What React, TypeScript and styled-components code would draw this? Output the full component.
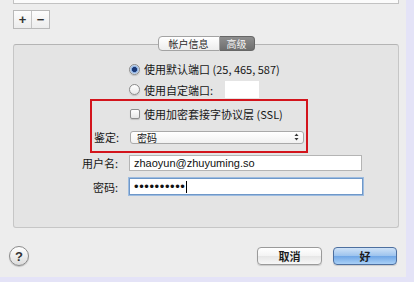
import React from 'react';
import styled, { createGlobalStyle } from 'styled-components';

const GlobalStyle = createGlobalStyle`
  html, body {
    margin: 0;
    padding: 0;
  }
  body {
    font-family: 'Liberation Sans', 'Noto Sans CJK SC', sans-serif;
    font-size: 11px;
    color: #161616;
  }
`;

const Screen = styled.div`
  width: 414px;
  height: 282px;
  background: #e4e3f7;
  overflow: hidden;
`;

const Window = styled.div`
  width: 406px;
  height: 277px;
  background: #ededed;
  display: flex;
  flex-direction: column;
`;

const TopSection = styled.div`
  padding-left: 13px;
  display: flex;
  flex-direction: column;
`;

const ListBox = styled.div`
  width: 384px;
  height: 3px;
  background: #fbfbfb;
  border: 1px solid #c2c2c2;
  border-top: none;
`;

const SegGroup = styled.div`
  margin-top: 6px;
  display: flex;
  width: 37px;
  height: 19px;
  border: 1px solid #b9b9b9;
  background: linear-gradient(#fdfdfd, #ececec);
  box-sizing: border-box;
`;

const SegButton = styled.div<{ $last?: boolean }>`
  flex: 1;
  display: flex;
  align-items: center;
  justify-content: center;
  font-weight: bold;
  font-size: 13px;
  color: #333;
  border-right: ${(p) => (p.$last ? 'none' : '1px solid #c4c4c4')};
`;

const TabRow = styled.div`
  margin-top: 7px;
  margin-bottom: -7px;
  display: flex;
  justify-content: center;
  position: relative;
  z-index: 1;
  width: 386px;
`;

const Tab = styled.div<{ $active?: boolean; $side: 'left' | 'right' }>`
  height: 15px;
  box-sizing: border-box;
  padding: 0 ${(p) => (p.$side === 'left' ? '10px' : '7px')};
  display: flex;
  align-items: center;
  font-size: 10px;
  font-family: 'Noto Sans CJK SC', sans-serif;
  color: ${(p) => (p.$active ? '#f4f4f4' : '#2a2a2a')};
  background: ${(p) =>
    p.$active ? 'linear-gradient(#8e8e8e, #6e6e6e)' : 'linear-gradient(#ffffff, #ededed)'};
  border: 1px solid ${(p) => (p.$active ? '#666' : '#a3a3a3')};
  border-radius: ${(p) => (p.$side === 'left' ? '4px 0 0 4px' : '0 4px 4px 0')};
  border-left: ${(p) => (p.$side === 'right' ? 'none' : undefined)};
`;

const GroupBox = styled.div`
  width: 386px;
  height: 184px;
  box-sizing: border-box;
  background: #e4e4e4;
  border: 1px solid #c6c6c6;
  border-top-color: #b4b4b4;
  border-radius: 3px;
  padding-top: 16px;
  display: flex;
  flex-direction: column;
`;

const OptionRow = styled.div<{ $indent: number; $top?: number }>`
  display: flex;
  align-items: center;
  gap: 4px;
  padding-left: ${(p) => p.$indent}px;
  margin-top: ${(p) => p.$top ?? 0}px;
  min-height: 14px;
  font-family: 'Noto Sans CJK SC', sans-serif;
  font-size: 11px;
`;

const Radio = styled.span<{ $on?: boolean }>`
  width: 11px;
  height: 11px;
  box-sizing: border-box;
  border-radius: 50%;
  border: 1px solid #8b8b8b;
  background: ${(p) =>
    p.$on ? 'radial-gradient(circle, #1b3a78 0 2.2px, #7fa7dc 2.8px, #eef3fb 5px)' : 'linear-gradient(#ffffff, #e9e9e9)'};
  box-shadow: 0 1px 1px rgba(0, 0, 0, 0.15);
  flex-shrink: 0;
`;

const Checkbox = styled.span`
  width: 10px;
  height: 10px;
  box-sizing: border-box;
  border: 1px solid #8d8d8d;
  border-radius: 2px;
  background: linear-gradient(#ffffff, #e6e6e6);
  box-shadow: 0 1px 1px rgba(0, 0, 0, 0.15);
  flex-shrink: 0;
`;

const PortInput = styled.div`
  width: 34px;
  height: 17px;
  background: #fff;
  margin-left: 8px;
`;

const Highlight = styled.div`
  margin-top: 1px;
  margin-left: 76px;
  width: 218px;
  box-sizing: border-box;
  border: 2px solid #d3141c;
  padding: 5px 2px 6px 0;
  display: flex;
  flex-direction: column;
`;

const FieldRow = styled.div<{ $labelWidth: number; $gap: number; $top?: number }>`
  display: flex;
  align-items: center;
  margin-top: ${(p) => p.$top ?? 0}px;
  font-family: 'Noto Sans CJK SC', sans-serif;
  font-size: 11px;

  & > label {
    width: ${(p) => p.$labelWidth}px;
    margin-right: ${(p) => p.$gap}px;
    text-align: right;
    flex-shrink: 0;
  }
`;

const PopUp = styled.div`
  flex: 1;
  height: 13px;
  box-sizing: border-box;
  border: 1px solid #a9a9a9;
  border-radius: 3px;
  background: linear-gradient(#ffffff, #f1f1f1);
  display: flex;
  align-items: center;
  justify-content: space-between;
  padding: 0 4px 0 6px;
  font-size: 10px;
`;

const TextInput = styled.div<{ $focus?: boolean }>`
  width: ${(p) => (p.$focus ? 234 : 233)}px;
  height: ${(p) => (p.$focus ? 17 : 16)}px;
  box-sizing: border-box;
  background: #fff;
  border: 1px solid ${(p) => (p.$focus ? '#6f98c9' : '#b4b4b4')};
  box-shadow: ${(p) => (p.$focus ? '0 0 0 1px #9dbce0' : 'none')};
  display: flex;
  align-items: center;
  padding-left: 4px;
  font-family: 'Liberation Sans', sans-serif;
  font-size: 11px;
  color: #111;
`;

const Dots = styled.span`
  font-size: 13px;
  letter-spacing: 0.6px;
  line-height: 1;
`;

const Caret = styled.span`
  width: 1px;
  height: 12px;
  background: #000;
  margin-left: 0;
`;

const Footer = styled.div`
  margin-top: 18px;
  padding: 0 9px;
  display: flex;
  align-items: center;
  gap: 11px;
`;

const HelpButton = styled.div`
  width: 20px;
  height: 20px;
  box-sizing: border-box;
  border-radius: 50%;
  border: 1px solid #8a8a8a;
  background: linear-gradient(#ffffff, #dcdcdc);
  box-shadow: 0 1px 1px rgba(0, 0, 0, 0.2);
  display: flex;
  align-items: center;
  justify-content: center;
  font-weight: bold;
  font-size: 13px;
  color: #333;
  margin-right: auto;
`;

const PushButton = styled.div<{ $primary?: boolean }>`
  width: ${(p) => (p.$primary ? 64 : 65)}px;
  height: 18px;
  box-sizing: border-box;
  border-radius: 4px;
  border: 1px solid ${(p) => (p.$primary ? '#4d6f9f' : '#9a9a9a')};
  background: ${(p) =>
    p.$primary
      ? 'linear-gradient(#cfe2f7 0%, #9cc3ee 50%, #6fa6e6 51%, #a9d0f6 100%)'
      : 'linear-gradient(#ffffff 0%, #f3f3f3 50%, #e6e6e6 51%, #f7f7f7 100%)'};
  box-shadow: 0 1px 1px rgba(0, 0, 0, 0.15);
  display: flex;
  align-items: center;
  justify-content: center;
  font-family: 'Noto Sans CJK SC', sans-serif;
  font-size: 11px;
  font-weight: bold;
  color: #1c1c1c;
`;

function UpDownArrows() {
  return (
    <svg width="5" height="8" viewBox="0 0 5 8">
      <path d="M2.5 0.5 L4.5 3 L0.5 3 Z" fill="#333" />
      <path d="M2.5 7.5 L4.5 5 L0.5 5 Z" fill="#333" />
    </svg>
  );
}

export default function App() {
  return (
    <Screen>
      <GlobalStyle />
      <Window>
        <TopSection>
          <ListBox />
          <SegGroup>
            <SegButton>+</SegButton>
            <SegButton $last>−</SegButton>
          </SegGroup>
          <TabRow>
            <Tab $side="left">帐户信息</Tab>
            <Tab $side="right" $active>高级</Tab>
          </TabRow>
          <GroupBox>
            <OptionRow $indent={115}>
              <Radio $on />
              <span>使用默认端口 (25, 465, 587)</span>
            </OptionRow>
            <OptionRow $indent={115} $top={4}>
              <Radio />
              <span>使用自定端口:</span>
              <PortInput />
            </OptionRow>
            <Highlight>
              <OptionRow $indent={38}>
                <Checkbox />
                <span>使用加密套接字协议层 (SSL)</span>
              </OptionRow>
              <FieldRow $labelWidth={27} $gap={11} $top={7}>
                <label>鉴定:</label>
                <PopUp>
                  <span>密码</span>
                  <UpDownArrows />
                </PopUp>
              </FieldRow>
            </Highlight>
            <FieldRow $labelWidth={104} $gap={11} $top={2}>
              <label>用户名:</label>
              <TextInput>zhaoyun@zhuyuming.so</TextInput>
            </FieldRow>
            <FieldRow $labelWidth={104} $gap={11} $top={7}>
              <label>密码:</label>
              <TextInput $focus>
                <Dots>••••••••••</Dots>
                <Caret />
              </TextInput>
            </FieldRow>
          </GroupBox>
        </TopSection>
        <Footer>
          <HelpButton>?</HelpButton>
          <PushButton>取消</PushButton>
          <PushButton $primary>好</PushButton>
        </Footer>
      </Window>
    </Screen>
  );
}
